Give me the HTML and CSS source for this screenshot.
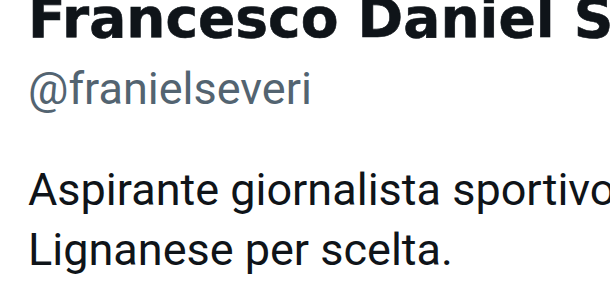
FILE: index.html
```html
<!DOCTYPE html>
<html lang="it">
<head>
    <meta charset="UTF-8">
    <meta name="viewport" content="width=device-width, initial-scale=1.0">
    <title>Francesco Daniel Severi</title>
    <link rel="stylesheet" href="styles.css">
</head>
<body>
    <div class="profile">
        <h1 class="name">Francesco Daniel Severi</h1>
        <div class="handle">@franielseveri</div>
        <p class="bio">Aspirante giornalista sportivo<br>Lignanese per scelta.</p>
    </div>
</body>
</html>
```

FILE: styles.css
```css
body {
    margin: 0;
    padding: 0;
    background-color: #ffffff;
    overflow: hidden;
}

.profile {
    padding-left: 28px;
    white-space: nowrap;
}

.name {
    margin: -9px 0 0 0;
    font-family: "DejaVu Sans", "Liberation Sans", sans-serif;
    font-weight: 700;
    font-size: 55px;
    line-height: 55px;
    color: #0f1419;
    -webkit-text-stroke: 0.6px #0f1419;
}

.handle {
    margin-top: 16px;
    font-family: Roboto, "Liberation Sans", sans-serif;
    font-size: 45px;
    line-height: 54px;
    color: #536471;
}

.bio {
    margin: 44px 0 0 0;
    font-family: Roboto, "Liberation Sans", sans-serif;
    font-size: 45px;
    line-height: 60px;
    color: #0f1419;
}
```
